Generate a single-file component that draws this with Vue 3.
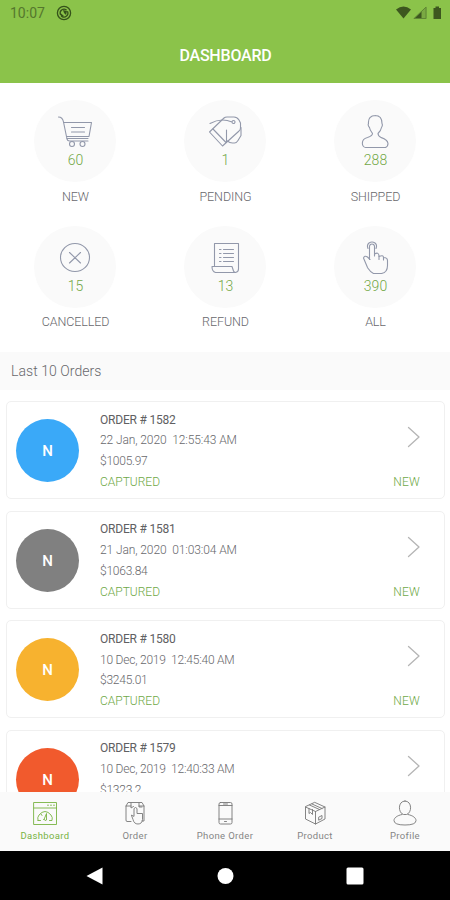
<template>
	<div class="screen">
		<header class="top">
			<div class="status">
				<span class="clock">10:07</span>
				<svg class="sync" viewBox="0 0 16 16">
					<circle cx="8" cy="8" r="6.6" />
					<path d="M4.4 9.5a4 4 0 0 1 5.8-4.8M11.7 6.7a4 4 0 0 1-5.6 4.9" />
					<path class="solid" d="M7 5l4 1-1 4-2-2zM4.500 8l3.500 3-3 1z" />
				</svg>
				<svg class="signals" viewBox="0 0 48 16">
					<path d="M0 4.6Q7.5-1.5 15 4.6L7.5 13.5z" />
					<path class="faint" d="M30.5 1.5V14H17.5z" />
					<path d="M25.5 6.3V14H17.5z" />
					<path class="edge" d="M30 2.5V13.5H18.5z" />
					<path d="M37.500 3h2V1.500h3.500V3h2v11h-7.500z" />
				</svg>
			</div>
			<h1>DASHBOARD</h1>
		</header>

		<main>
			<section class="stats">
				<div v-for="stat in stats" :key="stat.label" class="stat">
					<div class="bubble">
						<svg viewBox="0 0 36 34">
							<path v-for="(d, i) in stat.paths" :key="i" :d="d" />
						</svg>
						<span class="count">{{ stat.count }}</span>
					</div>
					<span class="label">{{ stat.label }}</span>
				</div>
			</section>

			<h2>Last 10 Orders</h2>

			<section class="orders">
				<article v-for="order in orders" :key="order.id" class="order">
					<div class="avatar" :class="order.color">N</div>
					<div class="details">
						<span class="number">ORDER # {{ order.id }}</span>
						<span class="date" :class="{ tight: order.tight }">{{ order.date }}&nbsp; {{ order.time }}</span>
						<span class="price">{{ order.price }}</span>
						<span v-if="!order.partial" class="green">CAPTURED</span>
					</div>
					<div class="side">
						<svg viewBox="0 0 13 22"><path d="M1.500 1.500l10.500 9.500L1.500 20.500" /></svg>
						<span v-if="!order.partial" class="green">NEW</span>
					</div>
				</article>
			</section>
		</main>

		<nav class="tabs">
			<a v-for="tab in tabs" :key="tab.label" :class="{ active: tab.active }">
				<svg viewBox="0 0 26 26">
					<path v-for="(d, i) in tab.paths" :key="i" :d="d" />
				</svg>
				<span>{{ tab.label }}</span>
			</a>
		</nav>

		<footer class="system">
			<svg viewBox="0 0 18 18"><path d="M0.500 9L16.500 0.500v17z" /></svg>
			<svg viewBox="0 0 18 18"><circle cx="9.500" cy="9" r="8" /></svg>
			<svg viewBox="0 0 18 18"><rect x="0.500" y="0.500" width="17" height="17" rx="1.500" /></svg>
		</footer>
	</div>
</template>

<script setup>
const stats = [
	{
		label: 'NEW',
		count: 60,
		paths: [
			'M1.500 3q4 0 5 5l3.500 17q.5 2 2.500 2H31',
			'M6.500 8.500H34.500L32 22.500H9.500',
			'M14.500 13.500h13M14.500 18h13M10 24.500h21',
			'M12.500 30a2.500 2.500 0 1 0 5 0a2.500 2.500 0 1 0-5 0M23 30a2.500 2.500 0 1 0 5 0a2.500 2.500 0 1 0-5 0',
		],
	},
	{
		label: 'PENDING',
		count: 1,
		paths: [
			'M2.500 18L17 4q1-1 3-1h7q3 0 5 3l1.500 3v5q0 2-2 3.500L15.500 32z',
			'M6 15l13 13.500',
			'M3 9.500q11-6 22-1.500M25 8a1.500 1.500 0 1 0 3 0a1.500 1.500 0 1 0-3 0',
			'M19.500 16v12M20.500 27q2 2 5 2h2q2 0 3.500-2.500l3-5v-8',
		],
	},
	{
		label: 'SHIPPED',
		count: 288,
		paths: [
			'M18.500 1.500c-5 0-7.500 3-7 8q-1 2 1 4c.5 3 2 4 3 6c0 2-2 3-5 4c-4 1-5.500 4-5 7q.5 3 4 3h19q2.500-1 2.500-4c-.5-4-4-5-7-6c-2-1-3-2-3-4c2-2 3-3 3.500-6q1.500-2 .5-4c0-5-2-8-7-8z',
		],
	},
	{
		label: 'CANCELLED',
		count: 15,
		paths: [
			'M3.500 17.500a14.500 14 0 1 0 29 0a14.500 14 0 1 0-29 0',
			'M12.500 12.500l11 10.500M23.500 12.500L12.500 23',
		],
	},
	{
		label: 'REFUND',
		count: 13,
		paths: [
			'M7.500 25.500V3.500H31.500V29q0 3-3 3.500H8.500q-3.500-1-3.500-6H25l1.500 4.500q.5 1.500 2 1.500',
			'M12.500 9.500h1.500M16.500 9.500h10M12.500 13.500h1.500M16.500 13.500h10M12.500 17.500h1.500M16.500 17.500h10M12.500 21.500h1.500M16.500 21.500h10',
		],
	},
	{
		label: 'ALL',
		count: 390,
		paths: [
			'M12.500 19.500V6q.5-2 2.500-2t2.500 2v10M17.500 14q4.500-2.500 4.500 2.500q4.500-2 4.500 1q4 0 4 3v5q0 7-6 8h-8c-3-1-4-3-6-6l-4-9.500q1-3 4-1l2.500 2.500',
			'M11 8.500q-1.500-3.500 1-5.500q3-2 6 0q2.500 2 1 5.500M22 16.500v3M26.500 17.500v2.500',
		],
	},
]

const orders = [
	{ id: 1582, date: '22 Jan, 2020', time: '12:55:43 AM', price: '$1005.97', color: 'blue' },
	{ id: 1581, date: '21 Jan, 2020', time: '01:03:04 AM', price: '$1063.84', color: 'gray' },
	{ id: 1580, date: '10 Dec, 2019', time: '12:45:40 AM', price: '$3245.01', color: 'yellow', tight: true },
	{ id: 1579, date: '10 Dec, 2019', time: '12:40:33 AM', price: '$1323.2', color: 'red', tight: true, partial: true },
]

const tabs = [
	{
		label: 'Dashboard',
		active: true,
		paths: [
			'M2 2.500H24.500V24.500H2zM2 8h22.500M15.500 5.200h1M18.500 5.200h1M21.500 5.200h1',
			'M6 20.500q-1-3 1-5.500q6-7 12 0q2 2.500 1 5.500h-2.500M6 20.500h2.500M9 14l1 1.500',
			'M12 19.500l2.500-6v6.500q-1.500 1.500-2.500-.5z',
		],
	},
	{
		label: 'Order',
		paths: [
			'M9 21.500H5q-1 0-1-1.500V6l2-3.500H20L22 6v15h-2M4 6h5M17 6h5M9 3v5l2.500-1.500',
			'M17 3v4h3M12 16V8.500q1.500-2 3 0v5h5.500v6q-.5 4.500-4.500 4.500q-4 0-5-4.500l-1.500-4z',
		],
	},
	{
		label: 'Phone Order',
		paths: [
			'M8.500 2.500h10q1.500 0 1.500 1.500V22.500q0 1.500-1.500 1.500h-10Q7 24 7 22.500V4q0-1.500 1.500-1.500zM7 5.500h13M7 19h13M11.500 4h4',
			'M12.500 21.500h2',
		],
	},
	{
		label: 'Product',
		paths: [
			'M13 2.500L23 7V19L13.500 24L3.500 19V7zM3.500 7L13.500 11.500L23 7M13.500 11.500V24',
			'M7.500 5L17.500 9.500M10 4l10 4.500M7 8.500v5l1.500-1 2 2v-5M17 17l3-1.500v3l-3 1.500z',
		],
	},
	{
		label: 'Profile',
		paths: [
			'M13 1c-7.500 0-7 12-1.500 13.500h3C20 13 20.500 1 13 1z',
			'M10 14.500C5 15.500 2 18 2 20.500q0 4.500 11 4.500T24 20.500c0-2.500-3-5-8-6',
		],
	},
]
</script>

<style>
body {
	background: #fff;
}
</style>

<style scoped>
.screen {
	display: flex;
	flex-direction: column;
	width: 450px;
	height: 900px;
	overflow: hidden;
	background: #fff;
	color: #68686c;
	font-family: Roboto, "Liberation Sans", sans-serif;
	font-weight: 300;
}

svg {
	display: block;
	fill: none;
	stroke-linecap: round;
	stroke-linejoin: round;
}

.top {
	flex: none;
	height: 83px;
	background: #8bc34a;
}

.status {
	display: flex;
	align-items: center;
	height: 26px;
	padding: 0 6px 0 10px;
	color: #55772d;
}

.clock {
	width: 46px;
	font-size: 14px;
	font-weight: 400;
}

.sync {
	width: 16px;
	height: 16px;
	stroke: #35521a;
	stroke-width: 1.3;
}

.sync .solid {
	fill: #35521a;
	stroke: none;
}

.signals {
	width: 48px;
	height: 16px;
	margin-left: auto;
	fill: #3d571f;
}

.signals .faint {
	fill: #7aa943;
}

.signals .edge {
	fill: none;
	stroke: #5f8635;
	stroke-width: 1;
}

h1 {
	margin: 0;
	padding-left: 1px;
	color: #fff;
	font-size: 16px;
	font-weight: 500;
	line-height: 59px;
	text-align: center;
	letter-spacing: -0.2px;
}

main {
	flex: 1;
	min-height: 0;
	overflow: hidden;
}

.stats {
	display: grid;
	grid-template-columns: repeat(3, 150px);
	grid-auto-rows: 125.5px;
	height: 252px;
	padding-top: 17px;
}

.stat {
	display: flex;
	flex-direction: column;
	align-items: center;
}

.bubble {
	display: flex;
	flex-direction: column;
	align-items: center;
	width: 82px;
	height: 82px;
	padding-top: 14px;
	box-sizing: border-box;
	border-radius: 50%;
	background: #fafafa;
}

.bubble svg {
	width: 36px;
	height: 34px;
	stroke: #9298aa;
	stroke-width: 1.1;
}

.count {
	margin-top: 4px;
	padding-left: 1px;
	color: #73a847;
	font-size: 14px;
	line-height: 16px;
}

.label {
	margin-top: 5.500px;
	padding-left: 1px;
	font-size: 12.5px;
	line-height: 18px;
	letter-spacing: -0.1px;
}

h2 {
	margin: 0;
	padding-left: 11px;
	background: #fafafa;
	font-size: 14px;
	font-weight: 300;
	line-height: 38px;
	letter-spacing: 0.05px;
}

.orders {
	display: flex;
	flex-direction: column;
	gap: 11.6px;
	padding: 11px 5px 0 6px;
}

.order {
	display: flex;
	flex: none;
	height: 98px;
	padding: 0 24px 0 9px;
	box-sizing: border-box;
	border: 1.500px solid #f0f0f0;
	border-radius: 5px;
}

.avatar {
	width: 63px;
	height: 63px;
	margin-top: 17px;
	border-radius: 50%;
	color: #fff;
	font-size: 15px;
	font-weight: 500;
	line-height: 64px;
	text-align: center;
}

.blue {
	background: #3aa9f8;
}

.gray {
	background: #808080;
}

.yellow {
	background: #f7b22f;
}

.red {
	background: #f15a2d;
}

.details {
	display: flex;
	flex-direction: column;
	margin-left: 21px;
	padding-top: 7.700px;
	font-size: 12px;
	line-height: 20.8px;
	white-space: nowrap;
}

.number {
	color: #606062;
	font-weight: 400;
	letter-spacing: -0.2px;
}

.date {
	letter-spacing: -0.1px;
}

.date.tight {
	letter-spacing: -0.22px;
}

.price {
	letter-spacing: -0.25px;
}

.side {
	display: flex;
	flex-direction: column;
	align-items: flex-end;
	margin-left: auto;
	padding-top: 24px;
	font-size: 12px;
	line-height: 20.8px;
	letter-spacing: 0.2px;
}

.side svg {
	width: 13px;
	height: 22px;
	margin-bottom: 24.100px;
	stroke: #b5b5b5;
	stroke-width: 1.300;
}

.green {
	color: #6fa947;
}

.tabs {
	display: grid;
	grid-template-columns: repeat(5, 90px);
	flex: none;
	height: 59px;
	background: #fafafa;
}

.tabs a {
	display: flex;
	flex-direction: column;
	align-items: center;
	padding-top: 8px;
	font-size: 9.500px;
	font-weight: 400;
	line-height: 12px;
	letter-spacing: 0.35px;
	color: #858585;
}

.tabs svg {
	width: 26px;
	height: 26px;
	margin-bottom: 4px;
	stroke: #777;
	stroke-width: 0.9;
}

.tabs .active {
	color: #78b342;
}

.tabs .active svg {
	stroke: #78b342;
}

.system {
	display: flex;
	flex: none;
	align-items: center;
	justify-content: center;
	gap: 112px;
	height: 49px;
	background: #000;
}

.system svg {
	width: 18px;
	height: 18px;
	fill: #fff;
}
</style>
